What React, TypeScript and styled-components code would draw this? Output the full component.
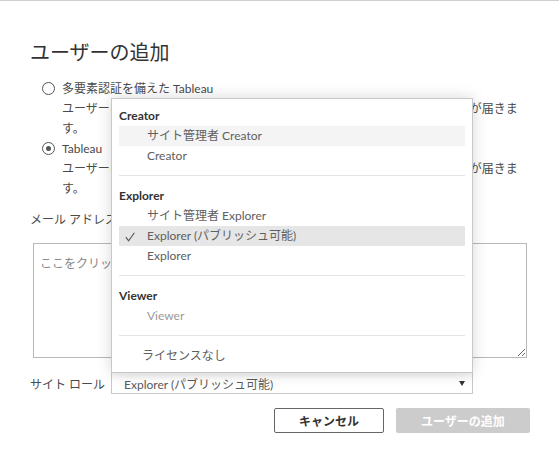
import React from 'react';
import styled, { createGlobalStyle } from 'styled-components';

const GlobalStyle = createGlobalStyle`
  html, body { margin: 0; padding: 0; background: #fff; }
  body {
    font-family: "Lato", "Noto Sans CJK JP", sans-serif;
    font-size: 12px;
    color: #333;
  }
  * { box-sizing: border-box; }
`;

const Dialog = styled.div`
  border-top: 1px solid #cfcfcf;
  height: 463px;
  padding: 37px 29px 0 30px;
  display: flex;
  flex-direction: column;
`;

const Title = styled.h1`
  margin: 0;
  font-size: 20px;
  line-height: 28px;
  font-weight: 400;
  color: #333;
`;

const RadioGroup = styled.div`
  margin: 13px 0 0 12px;
  display: flex;
  flex-direction: column;
`;

const RadioOption = styled.label`
  display: flex;
  align-items: flex-start;
  gap: 7px;
  line-height: 20px;
  color: #4a4a4a;
`;

const RadioCircle = styled.span<{ $checked?: boolean }>`
  flex: none;
  width: 13px;
  height: 13px;
  margin-top: 3px;
  border: 1px solid #555;
  border-radius: 50%;
  display: flex;
  align-items: center;
  justify-content: center;
  &::after {
    content: '';
    width: 5px;
    height: 5px;
    border-radius: 50%;
    background: #555;
    display: ${(p) => (p.$checked ? 'block' : 'none')};
  }
`;

const RadioText = styled.span`
  white-space: nowrap;
`;

const FieldLabel = styled.div`
  margin-top: 11px;
  line-height: 20px;
  color: #4a4a4a;
`;

const EmailArea = styled.textarea`
  display: block;
  margin: 13px 3px 0;
  height: 115px;
  padding: 10px 6px;
  border: 1px solid #b8b8b8;
  border-radius: 0;
  font-family: "Lato", "Noto Sans CJK JP", sans-serif;
  font-size: 12px;
  line-height: 20px;
  color: #333;
  resize: vertical;
  outline: none;
  &::placeholder { color: #888; }
`;

const RoleRow = styled.div`
  margin-top: 14px;
  display: flex;
  align-items: center;
  height: 22px;
`;

const RoleLabel = styled.span`
  width: 81px;
  flex: none;
  color: #4a4a4a;
`;

const SelectBox = styled.div`
  position: relative;
  width: 362px;
  height: 22px;
  border: 1px solid #c8c8c8;
  padding: 0 7px 0 12px;
  display: flex;
  align-items: center;
  justify-content: space-between;
  color: #5a5a5a;
  background: linear-gradient(#f4f4f4, #fff 8px);
`;

const Arrow = styled.span`
  width: 0;
  height: 0;
  border-left: 3.5px solid transparent;
  border-right: 3.5px solid transparent;
  border-top: 5px solid #333;
`;

const Menu = styled.div`
  position: absolute;
  left: -1px;
  right: -1px;
  bottom: 100%;
  background: #fff;
  border: 1px solid #c8c8c8;
  padding: 7px 7px 6px;
  box-shadow: 0 0 14px rgba(0, 0, 0, 0.16);
  z-index: 2;
`;

const GroupHeader = styled.div`
  line-height: 20px;
  font-weight: 700;
  color: #333;
`;

const MenuItem = styled.div<{ $bg?: string; $indent?: number; $muted?: boolean }>`
  position: relative;
  line-height: 20px;
  height: 20px;
  padding-left: ${(p) => p.$indent ?? 28}px;
  background: ${(p) => p.$bg ?? 'transparent'};
  color: ${(p) => (p.$muted ? '#9a9a9a' : '#606060')};
  white-space: nowrap;
`;

const Check = styled.svg`
  position: absolute;
  left: 6px;
  top: 6px;
`;

const Separator = styled.div`
  height: 1px;
  background: #e3e3e3;
  margin: 9px 0 10px;
`;

const ButtonRow = styled.div`
  margin-top: 14px;
  display: flex;
  justify-content: flex-end;
  gap: 12px;
`;

const Button = styled.button<{ $primary?: boolean }>`
  height: 25px;
  width: ${(p) => (p.$primary ? 134 : 110)}px;
  border: ${(p) => (p.$primary ? 'none' : '1px solid #666')};
  border-radius: 2px;
  background: ${(p) => (p.$primary ? '#cccccc' : '#fff')};
  color: ${(p) => (p.$primary ? '#fff' : '#333')};
  font-family: "Lato", "Noto Sans CJK JP", sans-serif;
  font-size: 12px;
  font-weight: 700;
  padding: 0;
`;

export default function App() {
  return (
    <>
      <GlobalStyle />
      <Dialog>
        <Title>ユーザーの追加</Title>
        <RadioGroup>
          <RadioOption>
            <RadioCircle />
            <RadioText>
              多要素認証を備えた Tableau
              <br />
              ユーザーには、サイトへのサインイン用のリンクが記載された招待のメールが届きま
              <br />
              す。
            </RadioText>
          </RadioOption>
          <RadioOption>
            <RadioCircle $checked />
            <RadioText>
              Tableau
              <br />
              ユーザーには、サイトへのサインイン用のリンクが記載された招待のメールが届きま
              <br />
              す。
            </RadioText>
          </RadioOption>
        </RadioGroup>
        <FieldLabel>メール アドレス</FieldLabel>
        <EmailArea placeholder="ここをクリックしてメール アドレスまたはユーザー名を入力" />
        <RoleRow>
          <RoleLabel>サイト ロール</RoleLabel>
          <SelectBox>
            <span>Explorer (パブリッシュ可能)</span>
            <Arrow />
            <Menu>
              <GroupHeader>Creator</GroupHeader>
              <MenuItem $bg="#f4f4f4">サイト管理者 Creator</MenuItem>
              <MenuItem>Creator</MenuItem>
              <Separator />
              <GroupHeader>Explorer</GroupHeader>
              <MenuItem>サイト管理者 Explorer</MenuItem>
              <MenuItem $bg="#e6e6e6">
                <Check width="10" height="10" viewBox="0 0 10 10">
                  <path d="M0.8 5.2 L3.6 8.8 L9.4 0.8" fill="none" stroke="#555" strokeWidth="1.1" />
                </Check>
                Explorer (パブリッシュ可能)
              </MenuItem>
              <MenuItem>Explorer</MenuItem>
              <Separator />
              <GroupHeader>Viewer</GroupHeader>
              <MenuItem $muted>Viewer</MenuItem>
              <Separator />
              <MenuItem $indent={23}>ライセンスなし</MenuItem>
            </Menu>
          </SelectBox>
        </RoleRow>
        <ButtonRow>
          <Button>キャンセル</Button>
          <Button $primary>ユーザーの追加</Button>
        </ButtonRow>
      </Dialog>
    </>
  );
}
